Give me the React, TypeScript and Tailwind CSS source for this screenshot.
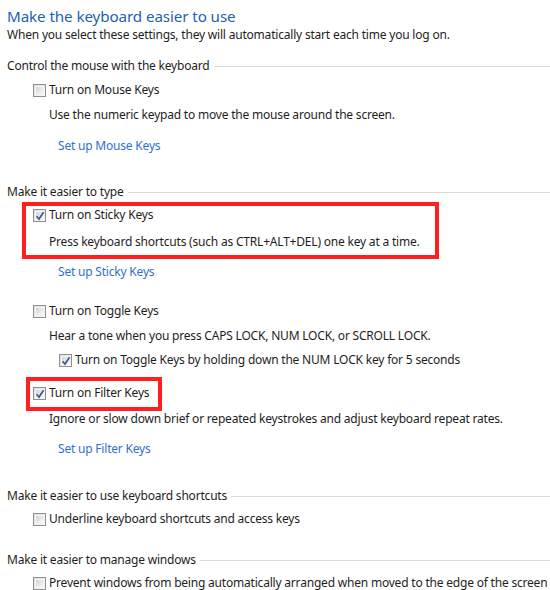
import React from "react";

const font = { fontFamily: '"Segoe UI", "Noto Sans", "Open Sans", sans-serif' };

function Box({ checked }: { checked?: boolean }) {
  return (
    <span className="relative inline-block w-[13px] h-[13px] shrink-0 border border-[#8f8f8f] bg-gradient-to-br from-[#dcdcdc] to-[#fbfbfb]">
      <span className="absolute inset-[1px] border border-[#f4f4f4] bg-gradient-to-br from-[#d6d6d6] to-[#f6f6f6]" />
      {checked && (
        <svg className="absolute left-[1px] top-[1px]" width="10" height="10" viewBox="0 0 10 10">
          <path d="M1.5 5.2 L4 8 L8.6 1.2" fill="none" stroke="#3c5a9a" strokeWidth="1.7" />
        </svg>
      )}
    </span>
  );
}

function Section({ title, mt }: { title: string; mt: string }) {
  return (
    <div className={`flex items-center h-[18px] pl-[7px] ${mt}`}>
      <span className="text-[#1e1e1e] whitespace-nowrap">{title}</span>
      <span className="flex-1 h-px bg-[#d9d9d9] ml-[4px]" />
    </div>
  );
}

function Check({ label, checked, mt, sub }: { label: string; checked?: boolean; mt: string; sub?: boolean }) {
  return (
    <div className={`flex items-center h-[18px] ${sub ? "pl-[59px]" : "pl-[33px]"} ${mt}`}>
      <Box checked={checked} />
      <span className="ml-[3px] whitespace-nowrap text-[#1e1e1e]">{label}</span>
    </div>
  );
}

function Desc({ text, mt }: { text: string; mt: string }) {
  return (
    <div className={`flex items-center h-[18px] pl-[49px] whitespace-nowrap text-[#1e1e1e] ${mt}`}>{text}</div>
  );
}

function Link({ text, mt }: { text: string; mt: string }) {
  return (
    <div className={`flex items-center h-[18px] pl-[58px] whitespace-nowrap text-[#2f6fcf] ${mt}`}>{text}</div>
  );
}

export default function App() {
  return (
    <div className="relative w-[550px] h-[590px] bg-white overflow-hidden text-[12px] tracking-[-0.2px]" style={font}>
      <div className="flex flex-col pt-[6px]">
        <div className="flex items-center h-[20px] pl-[7px] text-[15.2px] tracking-[-0.1px] text-[#1f5fb0] whitespace-nowrap">
          Make the keyboard easier to use
        </div>
        <div className="flex items-center h-[18px] pl-[7px] text-[#1e1e1e] whitespace-nowrap">
          When you select these settings, they will automatically start each time you log on.
        </div>

        <Section title="Control the mouse with the keyboard" mt="mt-[13px]" />
        <Check label="Turn on Mouse Keys" mt="mt-[6px]" />
        <Desc text="Use the numeric keypad to move the mouse around the screen." mt="mt-[7px]" />
        <Link text="Set up Mouse Keys" mt="mt-[13px]" />

        <Section title="Make it easier to type" mt="mt-[28px]" />
        <Check label="Turn on Sticky Keys" checked mt="mt-[5px]" />
        <Desc text="Press keyboard shortcuts (such as CTRL+ALT+DEL) one key at a time." mt="mt-[9px]" />
        <Link text="Set up Sticky Keys" mt="mt-[12px]" />

        <Check label="Turn on Toggle Keys" mt="mt-[21px]" />
        <Desc text="Hear a tone when you press CAPS LOCK, NUM LOCK, or SCROLL LOCK." mt="mt-[7px]" />
        <Check label="Turn on Toggle Keys by holding down the NUM LOCK key for 5 seconds" checked sub mt="mt-[6px]" />

        <Check label="Turn on Filter Keys" checked mt="mt-[15px]" />
        <Desc text="Ignore or slow down brief or repeated keystrokes and adjust keyboard repeat rates." mt="mt-[8px]" />
        <Link text="Set up Filter Keys" mt="mt-[12px]" />

        <Section title="Make it easier to use keyboard shortcuts" mt="mt-[29px]" />
        <Check label="Underline keyboard shortcuts and access keys" mt="mt-[5px]" />

        <Section title="Make it easier to manage windows" mt="mt-[23px]" />
        <Check label="Prevent windows from being automatically arranged when moved to the edge of the screen" mt="mt-[5px]" />
      </div>

      <div className="absolute left-[22px] top-[202px] w-[417px] h-[57px] border-[4px] border-[#ff1f1f]" />
      <div className="absolute left-[26px] top-[377px] w-[136px] h-[34px] border-[4px] border-[#ff1f1f]" />
    </div>
  );
}
